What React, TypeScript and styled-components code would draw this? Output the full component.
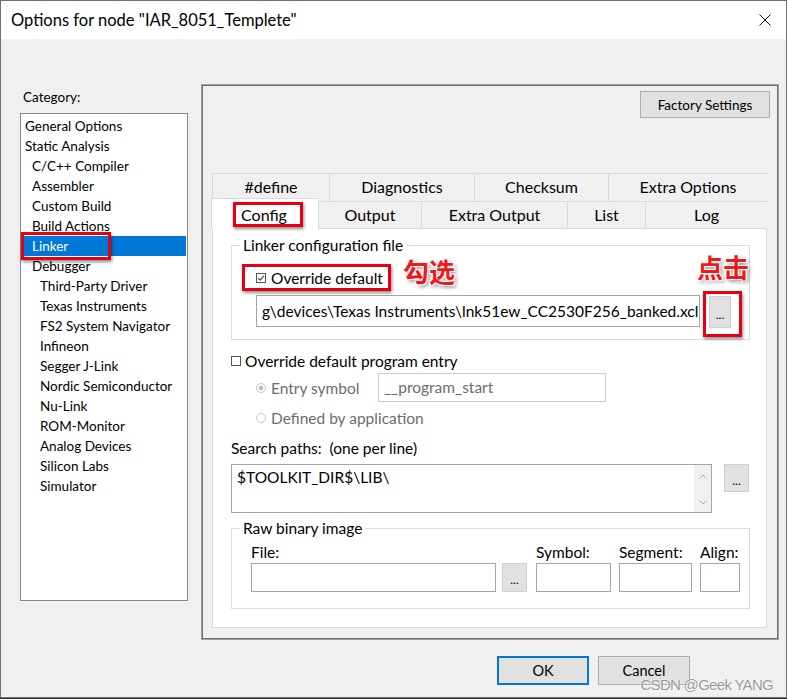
import React from "react";
import styled, { createGlobalStyle, css } from "styled-components";

const GlobalStyle = createGlobalStyle`
  html, body {
    margin: 0;
    padding: 0;
    background: #2f2f2f;
  }
  body {
    font-family: Lato, "Noto Sans", sans-serif;
    color: #000;
  }
  * {
    box-sizing: border-box;
  }
`;

const RED = "#e60012";

const Window = styled.div`
  position: relative;
  width: 787px;
  height: 698px;
  border: 1px solid #707070;
  background: #f0f0f0;
  display: flex;
  flex-direction: column;
`;

const TitleBar = styled.div`
  flex: none;
  height: 38px;
  background: #fff;
  display: flex;
  align-items: center;
  justify-content: space-between;
  padding: 0 15px 0 10px;
`;

const Title = styled.div`
  font-size: 16.5px;
`;

const CloseIcon = styled.svg`
  width: 12px;
  height: 12px;
`;

const Main = styled.div`
  display: flex;
  padding: 45px 0 0 19px;
`;

const Sidebar = styled.div`
  width: 168px;
  margin-right: 13px;
  padding-top: 4px;
  display: flex;
  flex-direction: column;
`;

const CategoryLabel = styled.div`
  font-size: 13.5px;
  line-height: 18px;
  margin: 0 0 7px 3px;
`;

const CategoryList = styled.ul`
  list-style: none;
  margin: 0;
  height: 488px;
  padding: 2px 0 0;
  background: #fff;
  border: 1px solid #828790;
`;

const CategoryItem = styled.li<{ $level: number; $selected?: boolean }>`
  position: relative;
  height: 20px;
  line-height: 20px;
  margin: 0 1px;
  font-size: 13.5px;
  padding-left: ${(p) => [3, 10, 18][p.$level]}px;
  ${(p) =>
    p.$selected &&
    css`
      background: #0078d7;
      color: #fff;
    `}
`;

const LinkerMark = styled.span`
  position: absolute;
  left: -1px;
  top: -4px;
  width: 90px;
  height: 28px;
  border: 3px solid ${RED};
  box-shadow: 1px 2px 3px rgba(0, 0, 0, 0.45);
`;

const Panel = styled.section`
  width: 578px;
  height: 556px;
  border: 1px solid #a0a0a0;
  box-shadow: inset 0 0 0 1px #6f6f6f;
  padding: 6px 8px 11px 10px;
  display: flex;
  flex-direction: column;
`;

const HeaderRow = styled.div`
  display: flex;
  justify-content: flex-end;
`;

const PushButton = styled.button<{ $default?: boolean }>`
  font-family: Lato, "Noto Sans", sans-serif;
  background: #e1e1e1;
  border: 1px solid #adadad;
  color: #000;
  padding: 0;
  ${(p) =>
    p.$default &&
    css`
      border: 2px solid #0078d7;
    `}
`;

const FactoryButton = styled(PushButton)`
  width: 130px;
  height: 27px;
  font-size: 13.5px;
`;

const Tabs = styled.div`
  margin: 55px 3px 0 0;
`;

const TabRow = styled.div<{ $cols: string; $height: number }>`
  display: grid;
  grid-template-columns: ${(p) => p.$cols};
  height: ${(p) => p.$height}px;
  border-right: 1px solid #d9d9d9;
`;

const Tab = styled.div<{ $active?: boolean }>`
  display: flex;
  align-items: center;
  justify-content: center;
  padding-bottom: 2px;
  font-size: 16px;
  background: #f0f0f0;
  border-top: 1px solid #d9d9d9;
  border-left: 1px solid #d9d9d9;
  ${(p) =>
    p.$active &&
    css`
      position: relative;
      z-index: 1;
      background: #fff;
      margin: -3px 0 -1px -1px;
      padding-bottom: 0;
    `}
`;

const ConfigMark = styled.span`
  margin-left: 6px;
  padding: 0 13px 0 5px;
  line-height: 19px;
  border: 3px solid ${RED};
  box-shadow: 1px 2px 3px rgba(0, 0, 0, 0.45);
`;

const TabBody = styled.div`
  height: 400px;
  background: #fff;
  border: 1px solid #d9d9d9;
  padding: 0 16px 0 18px;
  display: flex;
  flex-direction: column;
`;

const GroupBox = styled.fieldset<{ $top: number; $pad: string }>`
  margin: ${(p) => p.$top}px 0 0;
  padding: ${(p) => p.$pad};
  border: 1px solid #dcdcdc;
  min-width: 0;
`;

const GroupTitle = styled.legend`
  padding: 0 3px;
  font-size: 15.5px;
  line-height: 20px;
`;

const OverrideRow = styled.div`
  display: flex;
  align-items: flex-start;
`;

const MarkedCheck = styled.label`
  display: inline-flex;
  align-items: center;
  gap: 5px;
  height: 27px;
  margin-left: 2px;
  padding: 0 5px 0 11px;
  font-size: 15.5px;
  border: 3px solid ${RED};
  box-shadow: 1px 2px 3px rgba(0, 0, 0, 0.45);
`;

const Note = styled.span`
  font-family: "Noto Sans CJK SC", sans-serif;
  font-size: 26px;
  font-weight: 700;
  line-height: 26px;
  color: #f01818;
  text-shadow: -1px -1px 0 #fff, 1px -1px 0 #fff, -1px 1px 0 #fff, 1px 1px 0 #fff,
    2px 2px 4px rgba(0, 0, 0, 0.55);
`;

const CheckNote = styled(Note)`
  margin: -6px 0 0 12px;
`;

const ClickNote = styled(Note)`
  position: absolute;
  left: -9px;
  top: -40px;
  white-space: nowrap;
`;

const PathRow = styled.div`
  display: flex;
  align-items: flex-start;
`;

const TextBox = styled.div<{ $w: number; $h: number; $disabled?: boolean }>`
  width: ${(p) => p.$w}px;
  height: ${(p) => p.$h}px;
  flex: none;
  background: #fff;
  border: 1px solid ${(p) => (p.$disabled ? "#cccccc" : "#a5a5a5")};
  color: ${(p) => (p.$disabled ? "#6d6d6d" : "#000")};
  font-size: 15.5px;
  line-height: ${(p) => p.$h - 2}px;
  padding: 0 5px;
  white-space: nowrap;
  overflow: hidden;
`;

const PathBox = styled(TextBox)`
  margin: 4px 0 0 16px;
`;

const BrowseMark = styled.div`
  position: relative;
  margin-left: 3px;
  padding: 2px 8px 6px 3px;
  border: 3px solid ${RED};
  box-shadow: 1px 2px 3px rgba(0, 0, 0, 0.45);
`;

const DotsButton = styled(PushButton)<{ $w: number; $h: number }>`
  width: ${(p) => p.$w}px;
  height: ${(p) => p.$h}px;
  flex: none;
  font-size: 12px;
  padding-top: 4px;
  border-color: #cfcfcf;
`;

const CheckLine = styled.label`
  display: flex;
  align-items: center;
  gap: 4px;
  margin-top: 11px;
  font-size: 15.5px;
  line-height: 20px;
`;

const RadioLine = styled.div<{ $top: number }>`
  display: flex;
  align-items: center;
  margin: ${(p) => p.$top}px 0 0 25px;
  font-size: 15.5px;
  line-height: 20px;
  color: #6d6d6d;
`;

const RadioText = styled.span<{ $w?: number }>`
  margin-left: 5px;
  ${(p) => p.$w && `width: ${p.$w}px;`}
`;

const PlainLabel = styled.div`
  margin-top: 10px;
  font-size: 15.5px;
  line-height: 20px;
  white-space: pre;
`;

const SearchRow = styled.div`
  display: flex;
  align-items: flex-start;
  gap: 12px;
  margin-top: 6px;
`;

const PathsBox = styled.div`
  width: 481px;
  height: 49px;
  display: flex;
  background: #fff;
  border: 1px solid #a5a5a5;
`;

const PathsText = styled.div`
  flex: 1;
  padding: 3px 5px;
  font-size: 15.5px;
  line-height: 18px;
`;

const ScrollStrip = styled.div`
  width: 17px;
  background: #f0f0f0;
  display: flex;
  flex-direction: column;
  justify-content: space-between;
  align-items: center;
  padding: 9px 0 7px;
`;

const Chevron = styled.svg`
  width: 8px;
  height: 5px;
`;

const FieldRow = styled.div`
  display: flex;
  gap: 8px;
  margin-left: 11px;
`;

const Field = styled.div<{ $w: number }>`
  width: ${(p) => p.$w}px;
  display: flex;
  flex-direction: column;
  gap: 1px;
`;

const FieldLabel = styled.div`
  font-size: 15.5px;
  line-height: 20px;
`;

const FieldInputs = styled.div`
  display: flex;
  gap: 6px;
`;

const Footer = styled.div`
  display: flex;
  justify-content: flex-end;
  gap: 9px;
  padding: 16px 96px 0 0;
`;

const DialogButton = styled(PushButton)`
  width: 92px;
  height: 29px;
  font-size: 14.5px;
`;

const Watermark = styled.div`
  position: absolute;
  right: 13px;
  bottom: 4px;
  font-family: "Liberation Sans", Arial, sans-serif;
  font-size: 15px;
  letter-spacing: -0.7px;
  line-height: 16px;
  color: #999;
  text-shadow: 0 0 1px #fff, 0 0 2px #fff;
`;

const BoxGlyph = styled.svg`
  width: 10px;
  height: 10px;
  flex: none;
`;

const CheckBox = ({ checked }: { checked?: boolean }) => (
  <BoxGlyph viewBox="0 0 10 10">
    <rect x="0.5" y="0.5" width="9" height="9" fill="#fff" stroke="#555" />
    {checked && (
      <path d="M2.2 5.2 L4.2 7.2 L7.9 2.8" fill="none" stroke="#444" strokeWidth="1.1" />
    )}
  </BoxGlyph>
);

const Radio = ({ checked }: { checked?: boolean }) => (
  <BoxGlyph viewBox="0 0 10 10">
    <circle cx="5" cy="5" r="4.5" fill="#fff" stroke="#c6c6c6" />
    {checked && <circle cx="5" cy="5" r="2.4" fill="#bdbdbd" />}
  </BoxGlyph>
);

const categories = [
  { label: "General Options", level: 0 },
  { label: "Static Analysis", level: 0 },
  { label: "C/C++ Compiler", level: 1 },
  { label: "Assembler", level: 1 },
  { label: "Custom Build", level: 1 },
  { label: "Build Actions", level: 1 },
  { label: "Linker", level: 1 },
  { label: "Debugger", level: 1 },
  { label: "Third-Party Driver", level: 2 },
  { label: "Texas Instruments", level: 2 },
  { label: "FS2 System Navigator", level: 2 },
  { label: "Infineon", level: 2 },
  { label: "Segger J-Link", level: 2 },
  { label: "Nordic Semiconductor", level: 2 },
  { label: "Nu-Link", level: 2 },
  { label: "ROM-Monitor", level: 2 },
  { label: "Analog Devices", level: 2 },
  { label: "Silicon Labs", level: 2 },
  { label: "Simulator", level: 2 },
];

const backTabs = ["#define", "Diagnostics", "Checksum", "Extra Options"];
const frontTabs = ["Config", "Output", "Extra Output", "List", "Log"];

export default function App() {
  return (
    <>
      <GlobalStyle />
      <Window>
        <TitleBar>
          <Title>Options for node "IAR_8051_Templete"</Title>
          <CloseIcon viewBox="0 0 12 12">
            <path d="M0.5 0.5 L11.5 11.5 M11.5 0.5 L0.5 11.5" stroke="#111" strokeWidth="1" />
          </CloseIcon>
        </TitleBar>

        <Main>
          <Sidebar>
            <CategoryLabel>Category:</CategoryLabel>
            <CategoryList>
              {categories.map((c) => (
                <CategoryItem key={c.label} $level={c.level} $selected={c.label === "Linker"}>
                  {c.label}
                  {c.label === "Linker" && <LinkerMark />}
                </CategoryItem>
              ))}
            </CategoryList>
          </Sidebar>

          <Panel>
            <HeaderRow>
              <FactoryButton>Factory Settings</FactoryButton>
            </HeaderRow>

            <Tabs>
              <TabRow $cols="117px 145px 134px 159px" $height={28}>
                {backTabs.map((t) => (
                  <Tab key={t}>{t}</Tab>
                ))}
              </TabRow>
              <TabRow $cols="106px 103px 146px 78px 122px" $height={27}>
                {frontTabs.map((t) =>
                  t === "Config" ? (
                    <Tab key={t} $active>
                      <ConfigMark>{t}</ConfigMark>
                    </Tab>
                  ) : (
                    <Tab key={t}>{t}</Tab>
                  )
                )}
              </TabRow>

              <TabBody>
                <GroupBox $top={6} $pad="9px 8px 2px 8px">
                  <GroupTitle>Linker configuration file</GroupTitle>
                  <OverrideRow>
                    <MarkedCheck>
                      <CheckBox checked />
                      Override default
                    </MarkedCheck>
                    <CheckNote>勾选</CheckNote>
                  </OverrideRow>
                  <PathRow>
                    <PathBox $w={444} $h={32}>
                      g\devices\Texas Instruments\lnk51ew_CC2530F256_banked.xcl
                    </PathBox>
                    <BrowseMark>
                      <ClickNote>点击</ClickNote>
                      <DotsButton $w={22} $h={32}>...</DotsButton>
                    </BrowseMark>
                  </PathRow>
                </GroupBox>

                <CheckLine>
                  <CheckBox />
                  Override default program entry
                </CheckLine>
                <RadioLine $top={2}>
                  <Radio checked />
                  <RadioText $w={107}>Entry symbol</RadioText>
                  <TextBox $w={228} $h={29} $disabled>
                    __program_start
                  </TextBox>
                </RadioLine>
                <RadioLine $top={6}>
                  <Radio />
                  <RadioText>Defined by application</RadioText>
                </RadioLine>

                <PlainLabel>Search paths:  (one per line)</PlainLabel>
                <SearchRow>
                  <PathsBox>
                    <PathsText>$TOOLKIT_DIR$\LIB\</PathsText>
                    <ScrollStrip>
                      <Chevron viewBox="0 0 8 5">
                        <path d="M0.5 4.5 L4 1 L7.5 4.5" fill="none" stroke="#a6a6a6" />
                      </Chevron>
                      <Chevron viewBox="0 0 8 5">
                        <path d="M0.5 0.5 L4 4 L7.5 0.5" fill="none" stroke="#a6a6a6" />
                      </Chevron>
                    </ScrollStrip>
                  </PathsBox>
                  <DotsButton $w={25} $h={28}>...</DotsButton>
                </SearchRow>

                <GroupBox $top={5} $pad="4px 8px 16px 8px">
                  <GroupTitle>Raw binary image</GroupTitle>
                  <FieldRow>
                    <Field $w={277}>
                      <FieldLabel>File:</FieldLabel>
                      <FieldInputs>
                        <TextBox $w={245} $h={29} />
                        <DotsButton $w={25} $h={29}>...</DotsButton>
                      </FieldInputs>
                    </Field>
                    <Field $w={75}>
                      <FieldLabel>Symbol:</FieldLabel>
                      <TextBox $w={75} $h={29} />
                    </Field>
                    <Field $w={73}>
                      <FieldLabel>Segment:</FieldLabel>
                      <TextBox $w={73} $h={29} />
                    </Field>
                    <Field $w={40}>
                      <FieldLabel>Align:</FieldLabel>
                      <TextBox $w={40} $h={29} />
                    </Field>
                  </FieldRow>
                </GroupBox>
              </TabBody>
            </Tabs>
          </Panel>
        </Main>

        <Footer>
          <DialogButton $default>OK</DialogButton>
          <DialogButton>Cancel</DialogButton>
        </Footer>

        <Watermark>CSDN @Geek YANG</Watermark>
      </Window>
    </>
  );
}
